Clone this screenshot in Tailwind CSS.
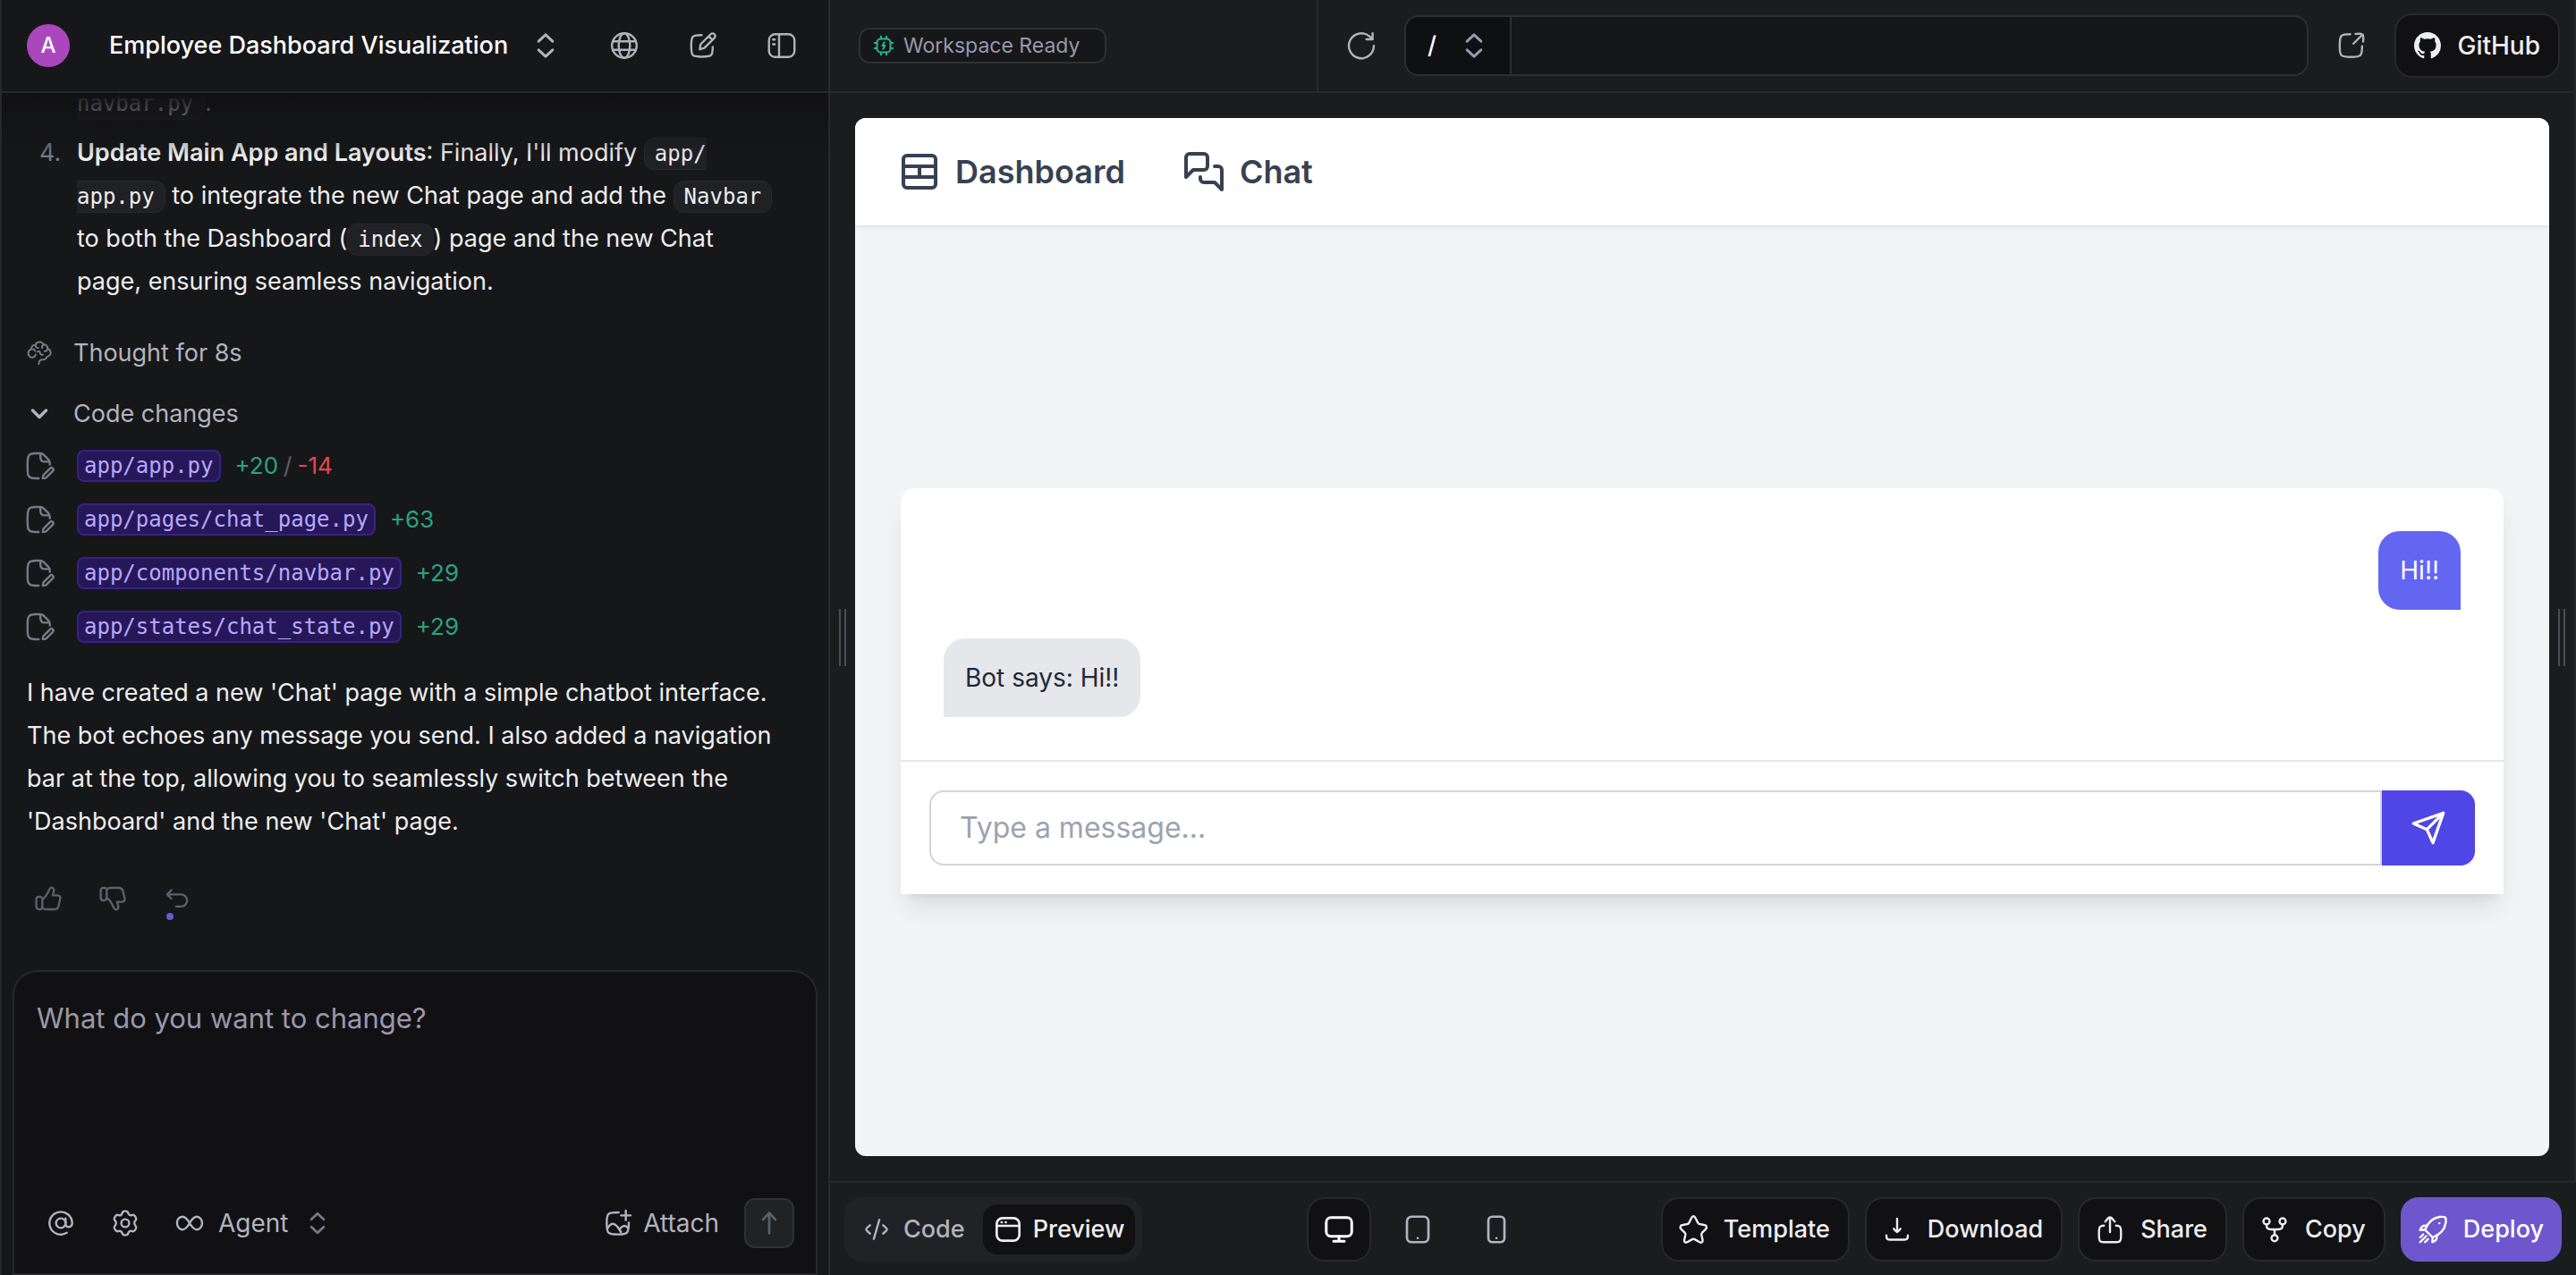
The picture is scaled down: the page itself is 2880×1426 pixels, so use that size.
<!DOCTYPE html>
<html lang="en">
<head>
<meta charset="utf-8">
<title>Employee Dashboard Visualization</title>
<script src="https://cdn.jsdelivr.net/npm/@tailwindcss/browser@4"></script>
</head>
<body class="bg-[#1b1c1e] font-['Inter',sans-serif] text-[27px] leading-[48px] text-[#edeef0]">

<!-- shared icon set -->
<svg class="hidden" aria-hidden="true">
  <symbol id="unfold" viewBox="0 0 24 24"><path d="M17.2 8.8 12 3.9 6.8 8.8M17.2 15.2 12 20.1 6.8 15.2"/></symbol>
  <symbol id="globe" viewBox="0 0 24 24"><circle cx="12" cy="12" r="9.2"/><ellipse cx="12" cy="12" rx="4.2" ry="9.2"/><path d="M3.5 8.8h17M3.5 15.2h17"/></symbol>
  <symbol id="compose" viewBox="0 0 24 24"><path d="M11 4.2C7.3 4.2 5.6 4.3 4.4 5.4 3.2 6.6 3.2 8.5 3.2 12.2s0 5.700 1.200 6.900 3.100 1.200 6.800 1.200 5.600 0 6.800-1.200S19.200 16.600 19.200 13"/><path d="m9.600 14.800.6-3.800 7.500-7.500a1.900 1.900 0 0 1 2.800 2.800l-7.500 7.500zM16.300 5l2.700 2.700"/></symbol>
  <symbol id="panel" viewBox="0 0 24 24"><rect x="2.500" y="3.500" width="19" height="17" rx="4.500"/><path d="M10 3.500v17M5.500 7.500h1.300M5.500 11h1.300"/></symbol>
  <symbol id="brain" viewBox="0 0 24 24"><path d="M11.500 21.500c0-2 .8-3.300 2.600-3.700 2.200.4 4.400-.6 4.700-2.700 2.300-.3 3.700-2.300 3.200-4.300-.3-1.500-1.300-2.500-2.600-2.800.1-2.300-1.500-3.800-3.600-3.700C14.900 2.400 13.400 1.800 11.800 2c-1.700.2-2.900 1.200-3.400 2.700C6 4.600 4.600 6.200 4.900 8.200 2.900 9 1.800 10.600 2.200 12.600c.3 2.300 2 3.600 4 3.200 1.500-.3 2.300-1.300 2.400-2.600"/><path d="M5 8.500c1.500-.4 2.800.3 3.200 1.600M8.500 5c.1 1.600 1.200 2.300 2.500 2.300M10.200 10.800c1.400-.9 2.400-.2 2.600 1.200.2 1.200 1.200 1.800 2.400 1.300M15.800 4.500c-1.300.6-1.700 1.700-1.200 2.900M19.300 8c-.2 1.600-1.200 2.400-2.600 2.400"/></symbol>
  <symbol id="file-edit" viewBox="0 0 24 24"><path d="M11.500 21.300H9c-3 0-4.200-.6-5-1.800-.8-1.100-.8-2.500-.8-5.500v-4c0-3 .1-4.600 1.100-5.900C5.300 2.800 7 2.700 9.300 2.700h3.200c1.300 0 2 .3 2.900 1.200l3 3c1 1 1.400 1.700 1.400 3v1.200"/><path d="M12.800 3v2.500c0 2.500.9 3.400 3.200 3.400h3.200M14.500 21.300l.5-2.400 5-5a1.400 1.400 0 0 1 2 2l-5.200 5.200z"/></symbol>
  <symbol id="thumb-up" viewBox="0 0 24 24"><rect x="2" y="10.500" width="5" height="10.500" rx="2"/><path d="M7 12.800c1.200-1 3-2.500 4.300-5.100.8-1.500 1.600-4.700 3.400-5 1.500-.1 2.300 1.500 1.900 3.100L15.700 9.300h4c1.800 0 2.700 1.200 2.300 2.900l-1.400 6c-.5 1.900-1.800 2.800-3.800 2.800H10.500c-1.500 0-2.500-.4-3.500-1.200"/></symbol>
  <symbol id="undo" viewBox="0 0 24 24"><path d="M6.500 4 2.500 8l4 4M2.800 8h13a5.800 5.800 0 0 1 0 11.600H11"/></symbol>
  <symbol id="at" viewBox="0 0 24 24"><circle cx="12" cy="12" r="4"/><path d="M16 8v5.500a2.900 2.900 0 0 0 5.500-.8V12A9.500 9.500 0 1 0 17 20.100"/></symbol>
  <symbol id="gear" viewBox="0 0 24 24"><circle cx="12" cy="12" r="3.300"/><path d="M21 7.500l-.6-1c-.8-1.300-1.600-1.700-2.900-1.200-1.300.4-2.500-.2-2.900-1.500C14.200 2.500 13.700 2 12.700 2h-1.400c-1 0-1.500.5-1.900 1.800-.4 1.300-1.600 1.900-2.900 1.500-1.300-.5-2.100-.1-2.900 1.200l-.6 1c-.5 1-.3 1.700.6 2.600 1 1 1 2.800 0 3.800-.9.900-1.100 1.600-.6 2.600l.6 1c.8 1.300 1.600 1.700 2.900 1.200 1.300-.4 2.500.2 2.900 1.500.4 1.300.9 1.800 1.900 1.800h1.400c1 0 1.500-.5 1.900-1.800.4-1.300 1.600-1.900 2.900-1.500 1.300.5 2.100.1 2.900-1.200l.6-1c.5-1 .3-1.700-.6-2.600-1-1-1-2.800 0-3.800.9-.9 1.100-1.600.6-2.600z"/></symbol>
  <symbol id="infinity" viewBox="0 0 24 24"><path d="M12 12c-1.600-2.800-3.200-5.400-6-5.400A4.800 4.800 0 0 0 1.500 12c0 3 1.900 5.400 4.500 5.400 2.800 0 4.400-2.600 6-5.400s3.200-5.400 6-5.400c2.600 0 4.500 2.400 4.500 5.400s-1.900 5.400-4.500 5.400c-2.800 0-4.400-2.600-6-5.400z"/></symbol>
  <symbol id="image-add" viewBox="0 0 24 24"><path d="M12.500 3C7.500 3 5.500 3 4 4.300 2.500 5.800 2.500 7.800 2.500 12s0 6.500 1.500 8c1.500 1.400 3.500 1.500 7.700 1.500s6.300-.1 7.700-1.500c1.500-1.500 1.600-3.500 1.600-8.500M18.500 1.500v8M14.500 5.500h8"/><path d="M3 16.500c3-4.700 5.500-5.200 8.500-1.500l3 4.500M13.500 17c2-3.200 4.300-3.600 7-1"/></symbol>
  <symbol id="arrow-up" viewBox="0 0 24 24"><path d="M12 3.500v17M6.800 9 12 3.500 17.200 9"/></symbol>
  <symbol id="cpu" viewBox="0 0 24 24"><rect x="4.500" y="4.500" width="15" height="15" rx="4"/><path d="M12.700 8.300 10.500 12h3l-2.200 3.700M9 1.800v2.500M15 1.800v2.500M9 19.700v2.500M15 19.700v2.500M1.800 9h2.500M1.800 15h2.500M19.700 9h2.500M19.700 15h2.500"/></symbol>
  <symbol id="refresh" viewBox="0 0 24 24"><path d="M21.300 12.200A9.300 9.300 0 1 1 18.300 5.300l2 1.900M20.400 2.800v4.500h-4.600"/></symbol>
  <symbol id="external" viewBox="0 0 24 24"><path d="M11 3.500C7.400 3.500 5.700 3.600 4.500 4.700 3.200 6 3.200 8 3.200 12s0 6 1.300 7.200c1.200 1.300 3.100 1.300 7 1.300s5.900 0 7.100-1.300c1.200-1.200 1.300-3.200 1.300-6.700M13.500 10.500 20 4M15 3.300c2-.1 4.300-.4 5.300.5.800 1 .5 3.300.4 5.200"/></symbol>
  <symbol id="code" viewBox="0 0 24 24"><path d="m17.500 8.500 2 1.700c1.600 1.300 1.600 2.200 0 3.500l-2 1.800M6.500 8.500l-2 1.700c-1.600 1.300-1.600 2.200 0 3.500l2 1.800M14.300 4 9.700 20"/></symbol>
  <symbol id="browser" viewBox="0 0 24 24"><rect x="2.500" y="2.500" width="19" height="19" rx="5"/><path d="M2.500 9h19M6.600 6h.2M10 6h.2"/></symbol>
  <symbol id="monitor" viewBox="0 0 24 24"><rect x="2.500" y="3.200" width="19" height="14" rx="3.500"/><path d="M12 17.200v3.500M8 20.800h8"/></symbol>
  <symbol id="tablet" viewBox="0 0 24 24"><rect x="4" y="2.500" width="16" height="19" rx="3.500"/><path d="M12 18.500h.01"/></symbol>
  <symbol id="phone" viewBox="0 0 24 24"><rect x="6" y="2.500" width="12" height="19" rx="3"/><path d="M12 18.500h.01"/></symbol>
  <symbol id="star" viewBox="0 0 24 24"><path d="m13.700 3.500 1.800 3.600c.3.500.9 1 1.500 1l3.100.6c2 .3 2.500 1.800 1.100 3.200l-2.500 2.500c-.4.400-.6 1.200-.5 1.800l.7 3c.6 2.400-.7 3.300-2.700 2l-3-1.800c-.5-.3-1.400-.3-2 0l-3 1.800c-2 1.200-3.300.3-2.700-2l.7-3c.1-.6-.1-1.400-.5-1.800l-2.500-2.500c-1.400-1.400-1-2.900 1.100-3.200l3.100-.6c.6-.1 1.200-.5 1.500-1l1.800-3.600c.9-1.800 2.100-1.800 3 0z"/></symbol>
  <symbol id="download" viewBox="0 0 24 24"><path d="M12 13.500V4M12 14c-.7 0-2-2-2.500-2.500M12 14c.7 0 2-2 2.500-2.500M4 16.500c0 2.600.6 3.200 3.200 3.200h9.600c2.600 0 3.200-.6 3.200-3.200"/></symbol>
  <symbol id="share" viewBox="0 0 24 24"><path d="M12 14V3M8.500 6.200C9.300 5.200 10.600 3 12 3s2.700 2.200 3.500 3.200M7.500 9.200c-1.500 0-2.300.2-2.900.8-.8.800-.8 2-.8 4.500v2c0 2.400 0 3.400.8 4.200.8.700 2 .8 4.400.8h6c2.400 0 3.600 0 4.400-.8.800-.8.800-1.800.8-4.200v-2c0-2.500 0-3.700-.8-4.500-.6-.6-1.400-.8-2.900-.8"/></symbol>
  <symbol id="fork" viewBox="0 0 24 24"><circle cx="6" cy="6" r="2.300"/><circle cx="18" cy="6" r="2.300"/><circle cx="12" cy="18.500" r="2.300"/><path d="M6 8.300c0 3 .8 3.700 3.500 3.700h5c2.700 0 3.500-.7 3.500-3.700M12 12v4.200"/></symbol>
  <symbol id="rocket" viewBox="0 0 24 24"><path d="m11.800 18-5.700-5.800C8 7.500 11.500 3.500 17 2.700c1.700-.2 3.500-.3 4.200.4.600.6.600 2.500.3 4.200-.8 5.300-5 8.800-9.700 10.700zM7.800 9.300c-3-.8-4.500.6-5.300 3.200l3.600-.3M14.800 16.200c.8 3-.6 4.500-3.200 5.300l.2-3.500M16.800 7.400h.1M7 17l-4.500 4.500M4.800 15.700 2.500 18M8.400 19.200l-2.300 2.300"/></symbol>
  <symbol id="github" viewBox="0 0 16 16"><path d="M8 0C3.580 0 0 3.580 0 8c0 3.540 2.290 6.530 5.470 7.590.4.070.55-.17.55-.38 0-.19-.01-.82-.01-1.490-2.010.37-2.530-.49-2.690-.94-.09-.23-.48-.94-.82-1.130-.28-.15-.68-.52-.01-.53.63-.01 1.080.58 1.230.82.72 1.210 1.870.87 2.330.66.07-.52.28-.87.51-1.070-1.780-.2-3.640-.89-3.640-3.950 0-.87.31-1.590.82-2.150-.08-.2-.36-1.020.08-2.120 0 0 .67-.21 2.200.82.64-.18 1.320-.27 2-.27s1.360.09 2 .27c1.530-1.040 2.200-.82 2.200-.82.44 1.100.16 1.920.08 2.120.51.56.82 1.270.82 2.150 0 3.070-1.870 3.750-3.650 3.950.29.25.54.73.54 1.480 0 1.070-.01 1.930-.01 2.200 0 .21.15.46.55.38A8.010 8.010 0 0 0 16 8c0-4.420-3.580-8-8-8z"/></symbol>
</svg>

<div class="grid h-screen grid-cols-[29fr_61fr] overflow-hidden">

  <!-- conversation panel -->
  <aside class="flex h-full min-h-0 min-w-0 flex-col border-x-2 border-[#27282b] bg-[#161719]">
    <header class="flex h-[104px] shrink-0 items-center border-b-2 border-[#27282b] pr-4 pl-7">
      <span class="flex size-12 items-center justify-center rounded-full bg-[#ab47bc] text-2xl font-medium text-white">A</span>
      <button class="ml-7 flex items-center gap-6 px-4 font-medium whitespace-nowrap text-white">
        Employee Dashboard Visualization
        <svg class="size-9 fill-none stroke-[#b0b4ba] stroke-2 [stroke-linecap:round] [stroke-linejoin:round]"><use href="#unfold"/></svg>
      </button>
      <nav class="ml-auto flex gap-4 text-[#b0b4ba]">
        <button aria-label="Visibility" class="flex h-[72px] w-[72px] items-center justify-center"><svg class="size-9 fill-none stroke-current stroke-[1.6] [stroke-linecap:round] [stroke-linejoin:round]"><use href="#globe"/></svg></button>
        <button aria-label="New chat" class="flex h-[72px] w-[72px] items-center justify-center"><svg class="size-9 fill-none stroke-current stroke-[1.6] [stroke-linecap:round] [stroke-linejoin:round]"><use href="#compose"/></svg></button>
        <button aria-label="Toggle sidebar" class="flex h-[72px] w-[72px] items-center justify-center"><svg class="size-9 fill-none stroke-current stroke-[1.6] [stroke-linecap:round] [stroke-linejoin:round]"><use href="#panel"/></svg></button>
      </nav>
    </header>

    <section class="relative flex min-h-0 flex-1 flex-col justify-end overflow-hidden px-7 pb-14">
      <ol class="flex flex-col gap-2 pr-7">
        <li class="flex"><span class="w-14 shrink-0"></span><p><code class="rounded-r-xl border border-l-0 border-[#27282c] bg-[#202125] py-[3px] pr-3 font-['DejaVu_Sans_Mono',monospace] text-2xl">navbar.py</code>.</p></li>
        <li class="flex">
          <span class="w-14 shrink-0 pl-3.5 text-[#777b84]">4.</span>
          <p><strong class="font-semibold">Update Main App and Layouts</strong>: Finally, I'll modify <code class="rounded-xl border border-[#27282c] bg-[#202125] px-[11px] py-[3px] font-['DejaVu_Sans_Mono',monospace] text-2xl">app/<wbr>app.py</code> to integrate the new Chat page and add the <code class="rounded-xl border border-[#27282c] bg-[#202125] px-[11px] py-[3px] font-['DejaVu_Sans_Mono',monospace] text-2xl">Navbar</code> to both the Dashboard (<code class="rounded-xl border border-[#27282c] bg-[#202125] px-[11px] py-[3px] font-['DejaVu_Sans_Mono',monospace] text-2xl">index</code>) page and the new Chat page, ensuring seamless navigation.</p>
        </li>
      </ol>

      <button class="mt-8 flex items-center gap-6 self-start text-[#b2b3bd]">
        <span class="flex w-7 justify-center"><svg class="size-[30px] shrink-0 fill-none stroke-[#777b84] stroke-[1.6] [stroke-linecap:round] [stroke-linejoin:round]"><use href="#brain"/></svg></span>
        Thought for 8s
      </button>
      <button class="mt-5 flex items-center gap-6 self-start text-[#b2b3bd]">
        <span class="flex w-7 justify-center"><svg viewBox="0 0 24 24" class="size-6 fill-none stroke-current stroke-[3.500] [stroke-linecap:round] [stroke-linejoin:round]"><path d="m4.500 8 7.500 7.500L19.500 8"/></svg></span>
        Code changes
      </button>

      <ul class="mt-1">
        <li class="flex h-[60px] items-center gap-7"><span class="flex w-7 justify-center"><svg class="size-9 shrink-0 fill-none stroke-[#777b84] stroke-[1.6] [stroke-linecap:round] [stroke-linejoin:round]"><use href="#file-edit"/></svg></span><a href="#" class="flex h-9 items-center rounded-lg border-2 border-[#382186] bg-[#261858] px-[6px] font-['DejaVu_Sans_Mono',monospace] text-2xl text-[#baa7ff]">app/app.py</a><span class="-ml-3 flex gap-1.5 text-[26px] text-[#29a383]">+20 <span class="text-[#5a6169]">/</span> <span class="text-[#e5484d]">-14</span></span></li>
        <li class="flex h-[60px] items-center gap-7"><span class="flex w-7 justify-center"><svg class="size-9 shrink-0 fill-none stroke-[#777b84] stroke-[1.6] [stroke-linecap:round] [stroke-linejoin:round]"><use href="#file-edit"/></svg></span><a href="#" class="flex h-9 items-center rounded-lg border-2 border-[#382186] bg-[#261858] px-[6px] font-['DejaVu_Sans_Mono',monospace] text-2xl text-[#baa7ff]">app/pages/chat_page.py</a><span class="-ml-3 text-[26px] text-[#29a383]">+63</span></li>
        <li class="flex h-[60px] items-center gap-7"><span class="flex w-7 justify-center"><svg class="size-9 shrink-0 fill-none stroke-[#777b84] stroke-[1.6] [stroke-linecap:round] [stroke-linejoin:round]"><use href="#file-edit"/></svg></span><a href="#" class="flex h-9 items-center rounded-lg border-2 border-[#382186] bg-[#261858] px-[6px] font-['DejaVu_Sans_Mono',monospace] text-2xl text-[#baa7ff]">app/components/navbar.py</a><span class="-ml-3 text-[26px] text-[#29a383]">+29</span></li>
        <li class="flex h-[60px] items-center gap-7"><span class="flex w-7 justify-center"><svg class="size-9 shrink-0 fill-none stroke-[#777b84] stroke-[1.6] [stroke-linecap:round] [stroke-linejoin:round]"><use href="#file-edit"/></svg></span><a href="#" class="flex h-9 items-center rounded-lg border-2 border-[#382186] bg-[#261858] px-[6px] font-['DejaVu_Sans_Mono',monospace] text-2xl text-[#baa7ff]">app/states/chat_state.py</a><span class="-ml-3 text-[26px] text-[#29a383]">+29</span></li>
      </ul>

      <p class="mt-5 pr-7">I have created a new 'Chat' page with a simple chatbot interface. The bot echoes any message you send. I also added a navigation bar at the top, allowing you to seamlessly switch between the 'Dashboard' and the new 'Chat' page.</p>

      <div class="mt-[38px] -ml-3 flex text-[#5a6169]">
        <button aria-label="Good response" class="flex h-12 w-[72px] items-center justify-center"><svg class="size-8 fill-none stroke-current stroke-[1.800] [stroke-linecap:round] [stroke-linejoin:round]"><use href="#thumb-up"/></svg></button>
        <button aria-label="Bad response" class="flex h-12 w-[72px] items-center justify-center"><svg class="size-8 -scale-y-100 fill-none stroke-current stroke-[1.800] [stroke-linecap:round] [stroke-linejoin:round]"><use href="#thumb-up"/></svg></button>
        <button aria-label="Revert" class="relative flex h-12 w-[72px] items-center justify-center"><svg class="size-7 fill-none stroke-current stroke-2 [stroke-linecap:round] [stroke-linejoin:round]"><use href="#undo"/></svg><span class="absolute bottom-0 left-6 size-2 rounded-full bg-[#6e56cf]"></span></button>
      </div>
      <div class="absolute inset-x-0 top-0 h-[72px] bg-linear-to-b from-[#111113] to-[#161719]/0"></div>
    </section>

    <!-- composer -->
    <form class="mx-3 flex h-[341px] shrink-0 flex-col rounded-t-[28px] border-2 border-[#27282b] bg-[#111113]">
      <textarea aria-label="Message" placeholder="What do you want to change?" class="w-full flex-1 resize-none px-[25px] pt-7 text-[31px] outline-none placeholder:text-[#9a98ab]"></textarea>
      <div class="flex items-center pr-6 pb-7 pl-4 text-[#b2b3bd]">
        <button type="button" aria-label="Mention" class="flex h-14 w-[72px] items-center justify-center"><svg class="size-8 fill-none stroke-current stroke-[1.800] [stroke-linecap:round]"><use href="#at"/></svg></button>
        <button type="button" aria-label="Settings" class="flex h-14 w-[72px] items-center justify-center"><svg class="size-8 fill-none stroke-current stroke-[1.800]"><use href="#gear"/></svg></button>
        <button type="button" class="flex h-14 items-center gap-4 px-5 text-[28px]"><svg class="size-8 fill-none stroke-current stroke-[1.800]"><use href="#infinity"/></svg>Agent<svg class="size-8 fill-none stroke-[#777b84] stroke-2 [stroke-linecap:round] [stroke-linejoin:round]"><use href="#unfold"/></svg></button>
        <button type="button" class="mr-7 ml-auto flex h-14 items-center gap-3 text-[28px]"><svg class="size-8 fill-none stroke-current stroke-[1.800] [stroke-linecap:round] [stroke-linejoin:round]"><use href="#image-add"/></svg>Attach</button>
        <button type="submit" aria-label="Send" class="flex size-14 items-center justify-center rounded-xl border-2 border-[#2e3135] bg-[#212225]"><svg class="size-8 fill-none stroke-[#5a6169] stroke-2 [stroke-linecap:round] [stroke-linejoin:round]"><use href="#arrow-up"/></svg></button>
      </div>
    </form>
  </aside>

  <!-- workspace -->
  <main class="flex h-full min-h-0 min-w-0 flex-col">
    <header class="flex h-[104px] shrink-0 border-r-2 border-b-2 border-[#27282b]">
      <div class="flex w-[28%] shrink-0 items-center border-r-2 border-[#27282b] pl-8">
        <span class="flex h-10 items-center gap-2.5 rounded-xl border-2 border-[#2e2f33] bg-[#161719] pr-7 pl-3.5 text-[23px] whitespace-nowrap text-[#9a98ab]"><svg class="size-6 fill-none stroke-[#29b38c] stroke-2 [stroke-linecap:round] [stroke-linejoin:round]"><use href="#cpu"/></svg>Workspace Ready</span>
      </div>
      <div class="flex min-w-0 flex-1 items-center gap-4 px-4 text-[#b0b4ba]">
        <button aria-label="Reload" class="flex h-[72px] w-16 shrink-0 items-center justify-center"><svg class="size-9 fill-none stroke-current stroke-[1.6] [stroke-linecap:round] [stroke-linejoin:round]"><use href="#refresh"/></svg></button>
        <div class="flex h-[68px] min-w-0 flex-1 overflow-hidden rounded-2xl border-2 border-[#2e2f33] bg-[#161719]">
          <label class="relative flex w-[118px] shrink-0 items-center border-r-2 border-[#2e2f33] bg-[#0f1012]">
            <select aria-label="Route" class="h-full w-full appearance-none pl-6 font-medium text-white"><option>/</option></select>
            <svg class="pointer-events-none absolute right-[22px] size-9 fill-none stroke-[#9a98ab] stroke-2 [stroke-linecap:round] [stroke-linejoin:round]"><use href="#unfold"/></svg>
          </label>
          <input aria-label="Path" class="min-w-0 flex-1 px-4 outline-none">
        </div>
        <button aria-label="Open in new tab" class="flex h-[72px] w-16 shrink-0 items-center justify-center"><svg class="size-9 fill-none stroke-current stroke-[1.6] [stroke-linecap:round] [stroke-linejoin:round]"><use href="#external"/></svg></button>
        <button class="flex h-[72px] shrink-0 items-center gap-[18px] rounded-[20px] border-2 border-[#27282b] bg-[#111113] px-5 text-[28px] font-medium text-[#edeef0]"><svg class="size-[30px] fill-current"><use href="#github"/></svg>GitHub</button>
      </div>
    </header>

    <div class="flex min-h-0 flex-1 border-r-2 border-[#27282b] py-7">
      <div class="flex w-7 shrink-0 items-center justify-center"><span class="h-16 w-2 border-x-2 border-[#4c4c55]"></span></div>

      <!-- app preview -->
      <div class="flex min-w-0 flex-1 flex-col overflow-hidden rounded-xl bg-[#f3f4f6]">
        <nav class="relative flex h-[120px] shrink-0 items-center gap-16 bg-white px-12 text-4xl font-semibold text-[#374151] shadow-[0_2px_6px_rgba(0,0,0,0.06),0_2px_4px_-2px_rgba(0,0,0,0.06)]">
          <a href="#" class="flex items-center gap-4"><svg viewBox="0 0 24 24" class="size-12 fill-none stroke-current stroke-2 [stroke-linecap:round] [stroke-linejoin:round]"><rect x="3" y="3" width="18" height="18" rx="2"/><path d="M3 9h18M3 15h18M12 9v6"/></svg>Dashboard</a>
          <a href="#" class="flex items-center gap-4"><svg viewBox="0 0 24 24" class="size-12 fill-none stroke-current stroke-2 [stroke-linecap:round] [stroke-linejoin:round]"><path d="M14 9a2 2 0 0 1-2 2H6l-4 4V4a2 2 0 0 1 2-2h8a2 2 0 0 1 2 2z"/><path d="M18 9h2a2 2 0 0 1 2 2v11l-4-4h-6a2 2 0 0 1-2-2v-1"/></svg>Chat</a>
        </nav>
        <div class="flex flex-1 flex-col justify-center px-[51px]">
          <section class="rounded-t-2xl bg-white shadow-[0_20px_30px_-6px_rgba(0,0,0,0.1),0_8px_12px_-8px_rgba(0,0,0,0.1)]">
            <div class="flex flex-col gap-8 p-12 text-[28px] leading-10">
              <p class="self-end rounded-t-3xl rounded-bl-3xl bg-[#6366f1] p-6 text-white">Hi!!</p>
              <p class="self-start rounded-t-3xl rounded-br-3xl bg-[#e5e7eb] p-6 text-[#1f2937]">Bot says: Hi!!</p>
            </div>
            <form class="flex border-t-2 border-[#e5e7eb] p-8">
              <input aria-label="Type a message" placeholder="Type a message..." class="h-[84px] min-w-0 flex-1 rounded-l-2xl border-2 border-[#d1d5db] px-8 text-[32px] text-[#1f2937] outline-none placeholder:text-[#9ca3af]">
              <button aria-label="Send message" class="flex h-[84px] w-[104px] items-center justify-center rounded-r-2xl bg-[#4f46e5]"><svg viewBox="0 0 24 24" class="size-10 fill-none stroke-white stroke-2 [stroke-linecap:round] [stroke-linejoin:round]"><path d="m22 2-7 20-4-9-9-4ZM22 2 11 13"/></svg></button>
            </form>
          </section>
        </div>
      </div>

      <div class="flex w-7 shrink-0 items-center justify-center"><span class="h-16 w-2 border-x-2 border-[#4c4c55]"></span></div>
    </div>

    <!-- action bar -->
    <footer class="flex h-[105px] shrink-0 items-center justify-between border-t-2 border-[#27282b] px-4 font-medium">
      <div class="pr-9">
        <div class="flex h-[72px] items-center rounded-[20px] bg-[#212225] px-2">
          <button class="flex h-14 items-center gap-3.5 pr-5 pl-3 text-[#b2b3bd]"><svg class="size-8 fill-none stroke-current stroke-[1.800] [stroke-linecap:round] [stroke-linejoin:round]"><use href="#code"/></svg>Code</button>
          <button class="flex h-14 items-center gap-3 rounded-2xl bg-[#111113] px-3"><svg class="size-8 fill-none stroke-current stroke-2 [stroke-linecap:round] [stroke-linejoin:round]"><use href="#browser"/></svg>Preview</button>
        </div>
      </div>
      <div class="flex gap-4 text-[#b2b3bd]">
        <button aria-label="Desktop" class="flex size-[72px] items-center justify-center rounded-[20px] border-2 border-[#27282b] bg-[#111113] text-white"><svg class="size-9 fill-none stroke-current stroke-2 [stroke-linecap:round] [stroke-linejoin:round]"><use href="#monitor"/></svg></button>
        <button aria-label="Tablet" class="flex size-[72px] items-center justify-center"><svg class="size-9 fill-none stroke-current stroke-[1.800] [stroke-linecap:round]"><use href="#tablet"/></svg></button>
        <button aria-label="Phone" class="flex size-[72px] items-center justify-center"><svg class="size-9 fill-none stroke-current stroke-[1.800] [stroke-linecap:round]"><use href="#phone"/></svg></button>
      </div>
      <div class="flex gap-[17px]">
        <button class="flex h-[72px] items-center gap-4 rounded-[20px] border-2 border-[#27282b] bg-[#111113] pr-5 pl-4"><svg class="size-9 fill-none stroke-current stroke-[1.6] [stroke-linecap:round] [stroke-linejoin:round]"><use href="#star"/></svg>Template</button>
        <button class="flex h-[72px] items-center gap-4 rounded-[20px] border-2 border-[#27282b] bg-[#111113] pr-5 pl-4"><svg class="size-9 fill-none stroke-current stroke-[1.6] [stroke-linecap:round] [stroke-linejoin:round]"><use href="#download"/></svg>Download</button>
        <button class="flex h-[72px] items-center gap-4 rounded-[20px] border-2 border-[#27282b] bg-[#111113] pr-5 pl-4"><svg class="size-9 fill-none stroke-current stroke-[1.6] [stroke-linecap:round] [stroke-linejoin:round]"><use href="#share"/></svg>Share</button>
        <button class="flex h-[72px] items-center gap-4 rounded-[20px] border-2 border-[#27282b] bg-[#111113] pr-5 pl-4"><svg class="size-9 fill-none stroke-current stroke-[1.6] [stroke-linecap:round] [stroke-linejoin:round]"><use href="#fork"/></svg>Copy</button>
        <button class="flex h-[72px] items-center gap-4 rounded-[20px] border-2 border-[#6e56cf] bg-[#6e56cf] pr-[18px] pl-4 text-white"><svg class="size-9 fill-none stroke-current stroke-[1.6] [stroke-linecap:round] [stroke-linejoin:round]"><use href="#rocket"/></svg>Deploy</button>
      </div>
    </footer>
  </main>
</div>
</body>
</html>
